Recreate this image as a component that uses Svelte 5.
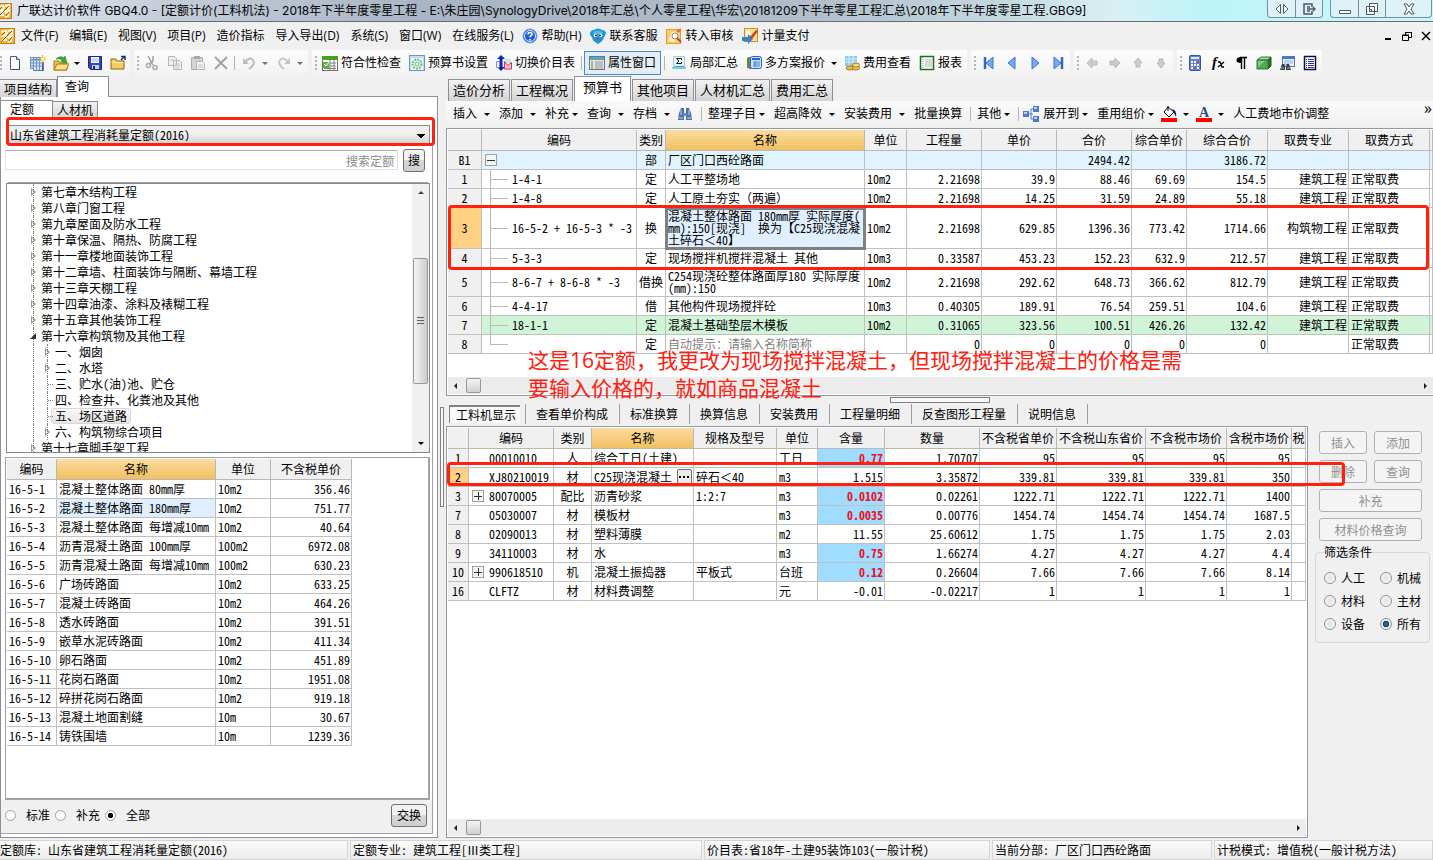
<script lang="ts">
  type Column = { title: string; width?: number; align?: string; active?: boolean };

  const menus = [
    { text: "文件(F)" },
    { text: "编辑(E)" },
    { text: "视图(V)" },
    { text: "项目(P)" },
    { text: "造价指标" },
    { text: "导入导出(D)" },
    { text: "系统(S)" },
    { text: "窗口(W)" },
    { text: "在线服务(L)" },
    { text: "帮助(H)", icon: "help" },
    { text: "联系客服", icon: "service" },
    { text: "转入审核", icon: "audit" },
    { text: "计量支付", icon: "pay" },
  ];

  type Tool = { icon?: string; text?: string; drop?: boolean; sep?: boolean; on?: boolean; off?: boolean; label?: string };

  const toolGroups: Tool[][] = [
    [
      { icon: "new", label: "新建" },
      { icon: "newgrid", label: "新建工程" },
      { icon: "open", label: "打开", drop: true },
      { icon: "save", label: "保存" },
      { icon: "folder", label: "目录" },
    ],
    [
      { icon: "cut", label: "剪切", off: true },
      { icon: "copy", label: "复制", off: true },
      { icon: "paste", label: "粘贴", off: true },
      { icon: "delete", label: "删除", off: true },
      { sep: true },
      { icon: "undo", label: "撤销", drop: true, off: true },
      { icon: "redo", label: "恢复", drop: true, off: true },
    ],
    [
      { icon: "check", text: "符合性检查" },
      { icon: "gear", text: "预算书设置" },
      { icon: "swap", text: "切换价目表" },
      { sep: true },
      { icon: "props", text: "属性窗口", on: true },
      { sep: true },
      { icon: "sum", text: "局部汇总" },
      { icon: "plans", text: "多方案报价", drop: true },
      { icon: "coins", text: "费用查看" },
      { icon: "report", text: "报表" },
    ],
    [
      { icon: "first", label: "首行" },
      { icon: "prev", label: "上一行" },
      { icon: "next", label: "下一行" },
      { icon: "last", label: "末行" },
    ],
    [
      { icon: "left", label: "左移", off: true },
      { icon: "right", label: "右移", off: true },
      { icon: "up", label: "上移", off: true },
      { icon: "down", label: "下移", off: true },
    ],
    [
      { icon: "calc", label: "计算器" },
      { icon: "fx", label: "函数" },
      { icon: "para", label: "特殊符号" },
      { icon: "cube", label: "图元" },
      { icon: "find", label: "查找" },
      { icon: "list", label: "列表" },
    ],
  ];

  const pages = ["造价分析", "工程概况", "预算书", "其他项目", "人材机汇总", "费用汇总"];

  const edits = [
    { text: "插入", drop: "wide" },
    { text: "添加", drop: "wide" },
    { text: "补充", drop: "tight" },
    { text: "查询", drop: "wide" },
    { text: "存档", drop: "wide" },
    { icon: "binoculars", label: "查找" },
    { sep: true },
    { text: "整理子目", drop: "tight" },
    { text: "超高降效", drop: "wide" },
    { text: "安装费用", drop: "wide" },
    { text: "批量换算" },
    { sep: true },
    { text: "其他", drop: "tight" },
    { sep: true },
    { icon: "expand", text: "展开到", drop: "tight" },
    { text: "重用组价", drop: "tight" },
    { icon: "bucket", label: "背景色", drop: "wide" },
    { icon: "fontcolor", label: "字体颜色", drop: "wide" },
    { text: "人工费地市价调整" },
  ];

  const chapters = [
    { text: "第七章木结构工程", level: 1, state: "closed" },
    { text: "第八章门窗工程", level: 1, state: "closed" },
    { text: "第九章屋面及防水工程", level: 1, state: "closed" },
    { text: "第十章保温、隔热、防腐工程", level: 1, state: "closed" },
    { text: "第十一章楼地面装饰工程", level: 1, state: "closed" },
    { text: "第十二章墙、柱面装饰与隔断、幕墙工程", level: 1, state: "closed" },
    { text: "第十三章天棚工程", level: 1, state: "closed" },
    { text: "第十四章油漆、涂料及裱糊工程", level: 1, state: "closed" },
    { text: "第十五章其他装饰工程", level: 1, state: "closed" },
    { text: "第十六章构筑物及其他工程", level: 1, state: "open" },
    { text: "一、烟囱", level: 2, state: "closed" },
    { text: "二、水塔", level: 2, state: "closed" },
    { text: "三、贮水(油)池、贮仓", level: 2, state: "leaf" },
    { text: "四、检查井、化粪池及其他", level: 2, state: "leaf" },
    { text: "五、场区道路", level: 2, state: "leaf", selected: true },
    { text: "六、构筑物综合项目", level: 2, state: "closed" },
    { text: "第十七章脚手架工程", level: 1, state: "closed" },
  ];

  const quotaCols: Column[] = [
    { title: "编码", width: 50 },
    { title: "名称", width: 159, active: true },
    { title: "单位", width: 55 },
    { title: "不含税单价", width: 81, align: "num" },
  ];

  const quotas = [
    ["16-5-1", "混凝土整体路面 80mm厚", "10m2", "356.46"],
    ["16-5-2", "混凝土整体路面 180mm厚", "10m2", "751.77"],
    ["16-5-3", "混凝土整体路面 每增减10mm", "10m2", "40.64"],
    ["16-5-4", "沥青混凝土路面 100mm厚", "100m2", "6972.08"],
    ["16-5-5", "沥青混凝土路面 每增减10mm", "100m2", "630.23"],
    ["16-5-6", "广场砖路面", "10m2", "633.25"],
    ["16-5-7", "混凝土砖路面", "10m2", "464.26"],
    ["16-5-8", "透水砖路面", "10m2", "391.51"],
    ["16-5-9", "嵌草水泥砖路面", "10m2", "411.34"],
    ["16-5-10", "卵石路面", "10m2", "451.89"],
    ["16-5-11", "花岗石路面", "10m2", "1951.08"],
    ["16-5-12", "碎拼花岗石路面", "10m2", "919.18"],
    ["16-5-13", "混凝土地面割缝", "10m", "30.67"],
    ["16-5-14", "铸铁围墙", "10m", "1239.36"],
  ];

  const budgetCols: Column[] = [
    { title: "", width: 34, align: "rownum" },
    { title: "编码", width: 155, align: "code" },
    { title: "类别", width: 29, align: "mid" },
    { title: "名称", width: 199, active: true, align: "name" },
    { title: "单位", width: 42, align: "unit" },
    { title: "工程量", width: 75, align: "num" },
    { title: "单价", width: 75, align: "num" },
    { title: "合价", width: 75, align: "num" },
    { title: "综合单价", width: 55, align: "num" },
    { title: "综合合价", width: 81, align: "num" },
    { title: "取费专业", width: 81, align: "num" },
    { title: "取费方式", width: 81 },
    { title: "" },
  ];

  const budget = [
    { kind: "part", cells: ["B1", "", "部", "厂区门口西砼路面", "", "", "", "2494.42", "", "3186.72", "", "", ""] },
    { kind: "item", cells: ["1", "1-4-1", "定", "人工平整场地", "10m2", "2.21698", "39.9", "88.46", "69.69", "154.5", "建筑工程", "正常取费", ""] },
    { kind: "item", cells: ["2", "1-4-8", "定", "人工原土夯实（两遍）", "10m2", "2.21698", "14.25", "31.59", "24.89", "55.18", "建筑工程", "正常取费", ""] },
    { kind: "item current", cells: ["3", "16-5-2 + 16-5-3 * -3", "换", "混凝土整体路面 180mm厚 实际厚度(\nmm):150[现浇]  换为【C25现浇混凝\n土碎石＜40】", "10m2", "2.21698", "629.85", "1396.36", "773.42", "1714.66", "构筑物工程", "正常取费", ""] },
    { kind: "item", cells: ["4", "5-3-3", "定", "现场搅拌机搅拌混凝土 其他", "10m3", "0.33587", "453.23", "152.23", "632.9", "212.57", "建筑工程", "正常取费", ""] },
    { kind: "item", cells: ["5", "8-6-7 + 8-6-8 * -3", "借换", "C254现浇砼整体路面厚180 实际厚度\n(mm):150", "10m2", "2.21698", "292.62", "648.73", "366.62", "812.79", "建筑工程", "正常取费", ""] },
    { kind: "item", cells: ["6", "4-4-17", "借", "其他构件现场搅拌砼", "10m3", "0.40305", "189.91", "76.54", "259.51", "104.6", "建筑工程", "正常取费", ""] },
    { kind: "item green", cells: ["7", "18-1-1", "定", "混凝土基础垫层木模板", "10m2", "0.31065", "323.56", "100.51", "426.26", "132.42", "建筑工程", "正常取费", ""] },
    { kind: "item hint", cells: ["8", "", "定", "自动提示：请输入名称简称", "", "0", "0", "0", "0", "0", "", "正常取费", ""] },
  ];

  const details = ["工料机显示", "查看单价构成", "标准换算", "换算信息", "安装费用", "工程量明细", "反查图形工程量", "说明信息"];

  const resourceCols: Column[] = [
    { title: "", width: 21, align: "rownum" },
    { title: "编码", width: 85, align: "code" },
    { title: "类别", width: 38, align: "mid" },
    { title: "名称", width: 102, active: true, align: "name" },
    { title: "规格及型号", width: 83 },
    { title: "单位", width: 41 },
    { title: "含量", width: 67, align: "num" },
    { title: "数量", width: 95, align: "num" },
    { title: "不含税省单价", width: 77, align: "num" },
    { title: "不含税山东省价", width: 89, align: "num" },
    { title: "不含税市场价", width: 81, align: "num" },
    { title: "含税市场价", width: 65, align: "num" },
    { title: "税" },
  ];

  const resources = [
    { cells: ["1", "00010010", "人", "综合工日(土建)", "", "工日", "0.77", "1.70707", "95", "95", "95", "95", ""], changed: true },
    { cells: ["2", "XJ80210019", "材", "C25现浇混凝土", "碎石＜40", "m3", "1.515", "3.35872", "339.81", "339.81", "339.81", "350", ""], current: true },
    { cells: ["3", "80070005", "配比", "沥青砂浆", "1:2:7", "m3", "0.0102", "0.02261", "1222.71", "1222.71", "1222.71", "1400", ""], changed: true, group: true },
    { cells: ["7", "05030007", "材", "模板材", "", "m3", "0.0035", "0.00776", "1454.74", "1454.74", "1454.74", "1687.5", ""], changed: true },
    { cells: ["8", "02090013", "材", "塑料薄膜", "", "m2", "11.55", "25.60612", "1.75", "1.75", "1.75", "2.03", ""] },
    { cells: ["9", "34110003", "材", "水", "", "m3", "0.75", "1.66274", "4.27", "4.27", "4.27", "4.4", ""], changed: true },
    { cells: ["10", "990618510", "机", "混凝土振捣器", "平板式", "台班", "0.12", "0.26604", "7.66", "7.66", "7.66", "8.14", ""], changed: true, group: true },
    { cells: ["16", "CLFTZ", "材", "材料费调整", "", "元", "-0.01", "-0.02217", "1", "1", "1", "1", ""] },
  ];

  const filters = ["人工", "机械", "材料", "主材", "设备", "所有"];
  const scopes = ["标准", "补充", "全部"];

  let scope = $state("全部");
  let filter = $state("所有");
  let keyword = $state("");
</script>

{#snippet icon(name: string)}
  <svg class="icon" viewBox="0 0 16 16" width="16" height="16" aria-hidden="true">
    {#if name === "app"}
      <rect x="0" y="0" width="16" height="16" fill="#c87a10" />
      <rect x="1" y="1" width="14" height="14" fill="#f3b43c" />
      <path d="M2 4l5-1 1 2-4 3 4 0-4 4h4M9 3l4-1v3l-4 5 4-2-1 5-3 1" stroke="#fff8d8" stroke-width="2" fill="none" />
      <path d="M2 14l11-11M6 4L3 7M13 9l-3 4" stroke="#8a4c08" fill="none" />
    {:else if name === "help"}
      <circle cx="8" cy="8" r="7" fill="#1d5fd0" stroke="#7ba0e0" />
      <circle cx="8" cy="8" r="5.5" fill="none" stroke="#dce9ff" />
      <path d="M6 6.500c0-3 4.500-2.500 4 0-.3 1-2 1-2 2.700M8 11v1.500" stroke="#fff" stroke-width="1.600" fill="none" />
    {:else if name === "service"}
      <path d="M0 5q1-3 4-3 4-3 8 0 3 0 4 3-1 3-2 4-1 4-3 5l-3 2-3-2Q2 12 2 9 0 8 0 5z" fill="#1894d8" />
      <path d="M3 4q5-3 10 0v2H3z" fill="#4cbcf0" />
      <circle cx="5.500" cy="7.500" r="1.800" fill="#fff" /><circle cx="10.500" cy="7.500" r="1.800" fill="#fff" />
      <circle cx="6" cy="7.500" r="1" fill="#123" /><circle cx="10" cy="7.500" r="1" fill="#123" />
      <path d="M7 11h2" stroke="#e83020" stroke-width="1.500" />
    {:else if name === "audit"}
      <rect x="0.500" y="1.500" width="14" height="14" fill="#f7ca6c" stroke="#e0a040" />
      <path d="M2 13l4-9 5-1 2 3-5 8z" fill="#fff2c8" />
      <circle cx="9" cy="8" r="3" fill="#fff" stroke="#a08070" />
      <path d="M11 10l4 4" stroke="#b05020" stroke-width="2" />
      <path d="M10 3l5-3v3l-3 2z" fill="#e8742c" />
    {:else if name === "pay"}
      <rect x="2.500" y="0.500" width="13" height="13" fill="#fbe39c" stroke="#d08a20" />
      <path d="M4 3h4v4H4z" fill="#fff" />
      <path d="M0 9h6V6l5 5-5 5v-3H0z" fill="#2a86d8" />
      <path d="M8 9l6-7 2 1-6 8z" fill="#d8381c" />
    {:else if name === "new"}
      <path d="M3.500 1.500h6l3 3v10h-9z" fill="#fff" stroke="#4c5c84" />
      <path d="M9.500 1.500v3h3" fill="#dce4f4" stroke="#4c5c84" />
      <path d="M12.500 6v8.500H5" stroke="#34446c" fill="none" />
    {:else if name === "newgrid"}
      <path d="M0.500 2.500h10v11h-10z" fill="#c4dcf8" stroke="#6c90c8" />
      <path d="M3.500 4.500h9v11h-9z" fill="#dce8f8" stroke="#5478b0" />
      <path d="M0 5h11M0 8h13M0 11h13M6.500 3v12M9.500 3v12M3.500 3v12" stroke="#6c90c8" />
      <path d="M13 7v9" stroke="#34588c" stroke-width="1.500" />
      <path d="M12.500 0v8M9 4h7M10 1.500l5 5M15 1.500l-5 5" stroke="#f0b824" />
      <circle cx="12.500" cy="4" r="1.500" fill="#fff4a0" />
    {:else if name === "open"}
      <path d="M1 15V6h5l1 2h7v7z" fill="#f0c040" stroke="#a87818" />
      <path d="M1 15l3-6h12l-3 6z" fill="#fce08c" stroke="#a87818" />
      <path d="M3 4q4-4 8-1l1-2 2 7-6-1 1-2Q6 3 3 4z" fill="#30b030" stroke="#187818" stroke-width="0.500" />
    {:else if name === "save"}
      <path d="M1.500 1.500h13v13h-11l-2-2z" fill="#3448b8" stroke="#1c2880" />
      <rect x="4" y="2" width="8" height="6" fill="#f4f6ff" />
      <path d="M5 4h6M5 6h6" stroke="#a8b4d8" />
      <rect x="5" y="10" width="7" height="4" fill="#c8d0e8" /><rect x="6" y="11" width="2" height="3" fill="#1c2880" />
    {:else if name === "folder"}
      <path d="M1 14V4h5l1 2h7v8z" fill="#f4cc60" stroke="#8c6410" />
      <path d="M1.500 7.500h12" stroke="#fff0b0" />
      <path d="M11 5l4-4M11 1.500h4V5" fill="none" stroke="#24345c" stroke-width="1.500" />
    {:else if name === "cut"}
      <path d="M4 1l5 9M9 1v5L5 9" fill="none" stroke="#a0a0a0" stroke-width="1.500" />
      <circle cx="4.500" cy="10.500" r="2" fill="none" stroke="#a8a8a8" stroke-width="1.500" /><circle cx="11" cy="12.500" r="2" fill="none" stroke="#a8a8a8" stroke-width="1.500" />
    {:else if name === "copy"}
      <path d="M1.500 1.500h6l2 2v7h-8zM6.500 5.500h6l2 2v7h-8z" fill="#f0f0f0" stroke="#b4b4b4" />
      <path d="M8 9h5M8 11h5M8 13h4M3 5h4" stroke="#c4c4c4" />
    {:else if name === "paste"}
      <path d="M1.500 2.500h11v12h-11z" fill="#d4d4d4" stroke="#acacac" />
      <rect x="4" y="1" width="6" height="3" fill="#a8a8a8" />
      <path d="M6.500 6.500h6l2 2v6h-8z" fill="#f4f4f4" stroke="#b4b4b4" /><path d="M8 10h5M8 12h5" stroke="#c4c4c4" />
    {:else if name === "delete"}
      <path d="M2 2l12 12M14 2L2 14" stroke="#a0a0a0" stroke-width="1.800" />
    {:else if name === "undo"}
      <path d="M4 7q5-6 8-2t-4 9" fill="none" stroke="#b8bcc4" stroke-width="2" /><path d="M2 3v6h6z" fill="#b8bcc4" />
    {:else if name === "redo"}
      <path d="M12 7Q7 1 4 5t4 9" fill="none" stroke="#c4c8cc" stroke-width="2" /><path d="M14 3v6H8z" fill="#c4c8cc" />
    {:else if name === "check"}
      <rect x="0.500" y="1.500" width="15" height="14" fill="#fff" stroke="#707070" />
      <rect x="0" y="1" width="16" height="4" fill="#48a020" />
      <path d="M2 8h12M2 11h12M2 13.500h12M8 5v10M12 5v10" stroke="#808080" />
      <rect x="1" y="7" width="6" height="6" fill="#60b830" /><path d="M2 9l2 2 3-4" stroke="#fff" fill="none" />
    {:else if name === "gear"}
      <rect x="0.500" y="0.500" width="15" height="15" fill="#c0dcf4" stroke="#6898c8" />
      <rect x="2" y="3" width="12" height="12" fill="#f0faf4" />
      <circle cx="8" cy="9" r="4.500" fill="none" stroke="#68b880" stroke-width="2" stroke-dasharray="2 1" /><circle cx="8" cy="9" r="2" fill="none" stroke="#68b880" />
    {:else if name === "swap"}
      <path d="M5 0l4 4H6.500v8H9l-4 4-4-4h2.500V4H1z" fill="#1020c0" />
      <path d="M0.500 6.500h3M0.500 6.500v6h3" fill="none" stroke="#8090e0" />
      <path d="M9 4h6v4H9z" fill="#b4ecf4" /><path d="M8.500 6.500l3 4 4-3v6.500h-7z" fill="#f8c8d8" stroke="#d82858" />
    {:else if name === "props"}
      <rect x="0.500" y="1.500" width="15" height="13" fill="#e4e4dc" stroke="#68788c" />
      <rect x="1" y="2" width="14" height="3" fill="#58a8b8" />
      <path d="M2 7h2M2 9h2M2 11h2M2 13h2" stroke="#48a048" /><path d="M6 7h8M6 9h8M6 11h8M6 13h8" stroke="#989898" />
    {:else if name === "sum"}
      <path d="M2.500 1.500h11v10h-11z" fill="#e0f2fa" stroke="#b0c4d0" />
      <path d="M10.500 5V3.500h-5L8 6 5.500 8.500h5V7" fill="none" stroke="#202020" /><path d="M1 12h14v2H1z" fill="#84c8e0" /><path d="M4 11.500h9" stroke="#48a0c8" />
    {:else if name === "plans"}
      <path d="M1 3v10h4V2H3z" fill="#30a040" /><path d="M3 3h4v11H3z" fill="#e85830" />
      <rect x="4.500" y="1.500" width="11" height="12" rx="2" fill="#c8e4ff" stroke="#2464c8" />
      <path d="M6 4h8" stroke="#2464c8" stroke-width="2" /><path d="M7 7h7M7 9h7M7 11h7M9 6v6" stroke="#5080d0" />
    {:else if name === "coins"}
      <rect x="1" y="1" width="12" height="10" fill="#88cce8" /><path d="M1 4h12M1 7h12M5 1v10M9 1v10" stroke="#d8f2fc" />
      <ellipse cx="6" cy="13" rx="4" ry="2" fill="#e8c048" stroke="#a87820" /><ellipse cx="12" cy="13" rx="3.500" ry="2" fill="#f0c850" stroke="#a87820" /><ellipse cx="12" cy="10" rx="3.500" ry="2" fill="#f8dc80" stroke="#a87820" />
    {:else if name === "report"}
      <rect x="1.500" y="1.500" width="13" height="13" fill="#fff" stroke="#147014" stroke-width="1.500" />
      <path d="M4 2v12" stroke="#8c8c8c" stroke-dasharray="1 1" /><path d="M6 5h7M6 7h7M6 9h7M6 11h7" stroke="#b0b0b0" />
    {:else if name === "first"}
      <path d="M4 2v12" stroke="#3068c8" stroke-width="2.500" /><path d="M12 2v12L5 8z" fill="#78a8f0" stroke="#3c74d0" />
    {:else if name === "prev"}
      <path d="M11 2v12L4 8z" fill="#78a8f0" stroke="#3c74d0" />
    {:else if name === "next"}
      <path d="M5 2v12l7-6z" fill="#78a8f0" stroke="#3c74d0" />
    {:else if name === "last"}
      <path d="M12 2v12" stroke="#3068c8" stroke-width="2.500" /><path d="M4 2v12l7-6z" fill="#78a8f0" stroke="#3c74d0" />
    {:else if name === "left"}
      <path d="M3 8l5-5v3h5v4H8v3z" fill="#ccc" stroke="#b8b8b8" />
    {:else if name === "right"}
      <path d="M13 8L8 3v3H3v4h5v3z" fill="#ccc" stroke="#b8b8b8" />
    {:else if name === "up"}
      <path d="M8 3l4 5h-2v4H6V8H4z" fill="#ccc" stroke="#b8b8b8" />
    {:else if name === "down"}
      <path d="M8 13l4-5h-2V4H6v4H4z" fill="#ccc" stroke="#b8b8b8" />
    {:else if name === "calc"}
      <rect x="2.500" y="0.500" width="11" height="15" rx="1" fill="#6488cc" stroke="#385498" />
      <rect x="4" y="2" width="8" height="2" fill="#d4ecfc" />
      <path d="M4 7h8M4 10h8M4 13h8" stroke="#f0f4fc" stroke-width="2" stroke-dasharray="2 1" /><path d="M10 7h2M7 13h2" stroke="#e04040" stroke-width="2" />
    {:else if name === "fx"}
      <text x="2" y="12" font-family="Liberation Serif, serif" font-size="15" font-style="italic" font-weight="bold">f</text>
      <path d="M8 7l2 0 2 5 2 0M14 7l-6 5" fill="none" stroke="#000" stroke-width="1.300" />
    {:else if name === "para"}
      <path d="M14 2.500H7M8.500 2v12M11.500 2v12" stroke="#000" stroke-width="1.400" /><path d="M8 2v6Q3 8 3.500 5T8 2z" />
    {:else if name === "cube"}
      <path d="M1 5l4-3h10l-3 3z" fill="#a4dca4" stroke="#307830" /><path d="M12 5l3-3v9l-3 3z" fill="#2c702c" stroke="#205820" /><path d="M1 5h11v9H1z" fill="#54a854" stroke="#307830" /><path d="M2 6h7l-7 6z" fill="#84cc84" />
    {:else if name === "find"}
      <rect x="3.500" y="1.500" width="12" height="10" fill="#e8f2fc" stroke="#5078b8" /><path d="M4 3h11" stroke="#4078d0" stroke-width="2" /><path d="M5 6h9M5 8h9" stroke="#90b0d8" />
      <path d="M1 15l2-6h3v6zM7 15V9h3l2 6z" fill="#343c44" /><path d="M2 13h3M8 13h3M5 10h3" stroke="#a8b4c0" />
    {:else if name === "list"}
      <rect x="2.500" y="1.500" width="11" height="13" fill="#fff" stroke="#101030" stroke-width="1.500" />
      <path d="M4 4.500h1M4 6.500h1M4 8.500h1M4 10.500h1M4 12.500h1M6 4.500h6M6 6.500h6M6 8.500h6M6 10.500h6M6 12.500h6" stroke="#2430b0" />
    {:else if name === "binoculars"}
      <path d="M1 14l1-7 2-5h3v12zM9 14V2h3l2 5 1 7z" fill="#4c70a8" /><path d="M6 7h4v3H6z" fill="#6c8cc0" /><path d="M2 12h4M10 12h4M4 4v5M12 4v5" stroke="#c8daf4" />
    {:else if name === "expand"}
      <path d="M5 8h5M8 3h3M8 3v10h3" stroke="#5c7cb8" fill="none" />
      <path d="M0 5h6v6H0zM10 0h6v6h-6zM10 10h6v6h-6z" fill="#4c7cc8" /><path d="M1 6h3v2H1zM11 1h3v2h-3zM11 11h3v2h-3z" fill="#b8d4f8" />
    {:else if name === "bucket"}
      <path d="M7 1l6 5-5 5-5-5z" fill="#fff" stroke="#000" /><path d="M7 0v5" stroke="#000" /><path d="M11 3q5 1 4 8l-2-4z" fill="#14148c" /><path d="M0 12h16v4H0z" fill="#f00" />
    {:else if name === "fontcolor"}
      <text x="3" y="11" font-family="Liberation Serif, serif" font-size="14" font-weight="bold" fill="#2c4c8c">A</text><path d="M0 12h16v4H0z" fill="#f00" />
    {/if}
  </svg>
{/snippet}

{#snippet hscroll()}
  <div class="hscroll">
    <i class="tri tri-left"></i>
    <span class="thumb"></span>
    <i class="tri tri-right"></i>
  </div>
{/snippet}

{#snippet head(cols: Column[])}
  <colgroup>
    {#each cols as col}
      <col style:width={col.width ? `${col.width}px` : "auto"} />
    {/each}
  </colgroup>
  <thead>
    <tr>
      {#each cols as col}
        <th class:active={col.active}>{col.title}</th>
      {/each}
    </tr>
  </thead>
{/snippet}

<div class="window">
  <header class="titlebar">
    {@render icon("app")}
    <h1>广联达计价软件 GBQ4.0 - [定额计价(工料机法) - 2018年下半年度零星工程 - E:\朱庄园\SynologyDrive\2018年汇总\个人零星工程\华宏\20181209下半年零星工程汇总\2018年下半年度零星工程.GBG9]</h1>
    <div class="caption">
      <button aria-label="展开"><svg viewBox="0 0 14 12" width="14" height="12"><path d="M5.500 1.500v9L1 6zM8.500 1.500v9L13 6z" fill="#fff" stroke="#4c5868" /></svg></button>
      <button aria-label="切换"><svg viewBox="0 0 14 12" width="14" height="12"><path d="M10 4V1H2v10h8V8M5 4h3M5 8h3M5 6h8M11 4l2 2-2 2" fill="none" stroke="#4c5868" stroke-width="1.500" /></svg></button>
    </div>
    <div class="caption">
      <button aria-label="最小化"><svg viewBox="0 0 14 12" width="14" height="12"><path d="M1.500 7.500h11v3h-11z" fill="#fff" stroke="#4c5868" /></svg></button>
      <button aria-label="还原"><svg viewBox="0 0 14 12" width="14" height="12"><path d="M4.500.5h8v8h-8zM1.500 3.500h8v8h-8z" fill="#fff" stroke="#4c5868" /><path d="M4.500 6.500h2v2h-2z" fill="none" stroke="#4c5868" /></svg></button>
      <button class="close" aria-label="关闭"><svg viewBox="0 0 14 12" width="14" height="12"><path d="M2 1h3l2 3 2-3h3L9 6l3 5H9L7 8l-2 3H2l3-5z" fill="#fff" stroke="#4c5868" /></svg></button>
    </div>
  </header>

  <nav class="menubar">
    {@render icon("app")}
    {#each menus as menu}
      <button class:pictured={menu.icon}>
        {#if menu.icon}{@render icon(menu.icon)}{/if}{menu.text}
      </button>
    {/each}
    <div class="mdi">
      <button aria-label="最小化"><svg viewBox="0 0 10 10" width="10" height="10"><path d="M2 8h6" stroke="#000" stroke-width="2" /></svg></button>
      <button aria-label="还原"><svg viewBox="0 0 10 10" width="10" height="10"><path d="M3 1.500h6M3.500 1v3M9.500 1v5.500H7M.5 4.500h6v5h-6zM0 4h7" fill="none" stroke="#000" /></svg></button>
      <button aria-label="关闭"><svg viewBox="0 0 10 10" width="10" height="10"><path d="M1 1l8 8M9 1L1 9" stroke="#000" stroke-width="1.500" /></svg></button>
    </div>
  </nav>

  <div class="toolbar">
    {#each toolGroups as group}
      <div class="tools">
        <span class="grip"></span>
        {#each group as tool}
          {#if tool.sep}
            <span class="sep"></span>
          {:else}
            <button class:on={tool.on} disabled={tool.off} aria-label={tool.label}>
              {@render icon(tool.icon ?? "")}{#if tool.text}<span>{tool.text}</span>{/if}{#if tool.drop}<i class="tri tri-down"></i>{/if}
            </button>
          {/if}
        {/each}
      </div>
    {/each}
  </div>

  <div class="body">
    <aside class="query">
      <div class="tabs">
        <button>项目结构</button>
        <button class="selected">查询</button>
      </div>
      <div class="query-page">
        <div class="tabs small">
          <button class="selected">定额</button>
          <button>人材机</button>
        </div>
        <div class="query-inner">
          <div class="library">
            <select aria-label="定额库">
              <option>山东省建筑工程消耗量定额(2016)</option>
            </select>
            <span class="mark mark-library"></span>
          </div>
          <form class="search">
            <input type="text" placeholder="搜索定额" aria-label="搜索定额" bind:value={keyword} />
            <button type="button">搜</button>
          </form>
          <div class="tree">
            <ul>
              {#each chapters as node}
                <li class={["level" + node.level, node.state]}>
                  <span class:picked={node.selected}>{node.text}</span>
                </li>
              {/each}
            </ul>
            <div class="vscroll">
              <i class="tri tri-up"></i>
              <span class="track"><span class="thumb"></span></span>
              <i class="tri tri-down"></i>
            </div>
          </div>
          <div class="quota">
            <table>
              {@render head(quotaCols)}
              <tbody>
                {#each quotas as row, r}
                  <tr>
                    {#each row as cell, c}
                      <td class={[quotaCols[c].align, { chosen: r === 1 && c === 1 }]}>{cell}</td>
                    {/each}
                  </tr>
                {/each}
              </tbody>
            </table>
          </div>
          <div class="scopes">
            {#each scopes as name}
              <label><input type="radio" name="scope" value={name} bind:group={scope} />{name}</label>
            {/each}
            <button class="push">交换</button>
          </div>
        </div>
      </div>
    </aside>

    <div class="divider"><span></span></div>

    <main>
      <div class="tabs pages">
        {#each pages as page, i}
          <button class:selected={i === 2}>{page}</button>
        {/each}
      </div>
      <div class="editbar">
        {#each edits as item}
          {#if item.sep}
            <span class="sep"></span>
          {:else}
            <button class={[item.drop, { iconic: item.icon }]} aria-label={item.label}>
              {#if item.icon}{@render icon(item.icon)}{/if}{#if item.text}<span>{item.text}</span>{/if}{#if item.drop}<i class="tri tri-down"></i>{/if}
            </button>
          {/if}
        {/each}
        <span class="more">»</span>
      </div>

      <section class="budget">
        <table>
          {@render head(budgetCols)}
          <tbody>
            {#each budget as row}
              <tr class={row.kind}>
                {#each row.cells as cell, c}
                  <td class={budgetCols[c].align}>
                    {#if row.kind === "part" && c === 1}<span class="box minus"></span>{/if}{cell}
                  </td>
                {/each}
              </tr>
            {/each}
          </tbody>
        </table>
        <div class="rest"></div>
        {@render hscroll()}
        <span class="mark mark-budget"></span>
        <p class="remark">这是16定额，我更改为现场搅拌混凝土，但现场搅拌混凝土的价格是需<br />要输入价格的，就如商品混凝土</p>
      </section>

      <div class="splitter"><span></span></div>

      <section class="detail">
        <div class="detail-tabs">
          {#each details as name, i}
            <button class:selected={i === 0}>{name}</button>
          {/each}
        </div>
        <div class="detail-body">
          <div class="resources">
            <table>
              {@render head(resourceCols)}
              <tbody>
                {#each resources as row}
                  <tr class:current={row.current}>
                    {#each row.cells as cell, c}
                      <td class={[resourceCols[c].align, { changed: row.changed && c === 6 }]}>
                        {#if row.group && c === 1}<span class="box plus"></span>{/if}{cell}{#if row.current && c === 3}<button class="dots" aria-label="选择"><svg viewBox="0 0 11 2" width="11" height="2"><path d="M0 0h2v2H0zM4 0h2v2H4zM8 0h2v2H8z" /></svg></button>{/if}
                      </td>
                    {/each}
                  </tr>
                {/each}
              </tbody>
            </table>
            <div class="rest"></div>
            {@render hscroll()}
            <span class="mark mark-resource"></span>
          </div>
          <div class="side">
            <div class="actions">
              <button disabled>插入</button>
              <button disabled>添加</button>
              <button disabled>删除</button>
              <button disabled>查询</button>
              <button disabled class="full">补充</button>
              <button disabled class="full">材料价格查询</button>
            </div>
            <fieldset>
              <legend>筛选条件</legend>
              {#each filters as name}
                <label><input type="radio" name="filter" value={name} bind:group={filter} />{name}</label>
              {/each}
            </fieldset>
          </div>
        </div>
      </section>
    </main>
  </div>

  <footer class="status">
    <span>定额库: 山东省建筑工程消耗量定额(2016)</span>
    <span>定额专业: 建筑工程[Ⅲ类工程]</span>
    <span>价目表:省18年-土建95装饰103(一般计税)</span>
    <span>当前分部: 厂区门口西砼路面</span>
    <span>计税模式: 增值税(一般计税方法)</span>
  </footer>
</div>

<style>
  :global(body) {
    margin: 0;
    background: #f0f0f0;
  }

  .window {
    display: flex;
    flex-direction: column;
    min-height: 100vh;
    overflow: hidden;
    color: #000;
    font: 12px/12px "Noto Sans Mono CJK SC", "Liberation Mono", "Noto Sans CJK SC", monospace;
  }

  .window :global(*) {
    box-sizing: border-box;
  }

  button,
  input,
  select {
    font: inherit;
    color: inherit;
  }

  button {
    padding: 0;
    border: 0;
    background: none;
    white-space: nowrap;
  }

  .icon {
    flex: none;
    display: block;
  }

  .tri {
    flex: none;
    width: 0;
    height: 0;
    border: 3px solid transparent;
  }

  .tri-down {
    border-top-color: currentColor;
    border-bottom: 0;
  }

  .tri-up {
    border-bottom-color: #404040;
    border-top: 0;
  }

  .tri-left {
    border-right-color: #202020;
    border-left: 0;
  }

  .tri-right {
    border-left-color: #202020;
    border-right: 0;
  }

  .titlebar {
    display: flex;
    align-items: flex-start;
    height: 22px;
    border-bottom: 1px solid #686c74;
    background: linear-gradient(90deg, #e4e8f0, #c4ccd8 12%, #a8b4c4 30%, #b0bcc8 55%, #c4d8e0 70%, #d8f0f4 78%, #bcf4f8 84%, #c8f8fc);
    font-family: Inter, "Noto Sans CJK SC", sans-serif;
  }

  .titlebar .icon {
    margin: 3px 5px 0 -4px;
  }

  h1 {
    flex: 1;
    margin: 0;
    overflow: hidden;
    white-space: nowrap;
    font-size: 12px;
    line-height: 21px;
    font-weight: normal;
  }

  .caption {
    display: flex;
    height: 18px;
    margin-right: 7px;
    border: 1px solid #7c8c98;
    border-top: 0;
    border-radius: 0 0 4px 4px;
    background: #dcf2f6;
  }

  .caption:last-child {
    margin-right: 1px;
  }

  .caption button {
    display: grid;
    place-items: center;
    width: 27px;
  }

  .caption button + button {
    border-left: 1px solid #7c8c98;
  }

  .caption .close {
    width: 46px;
  }

  .menubar {
    display: flex;
    align-items: center;
    gap: 11px;
    height: 28px;
    font-family: "Open Sans", "Noto Sans CJK SC", sans-serif;
  }

  .menubar > .icon {
    margin: 0 -5px 0 -1px;
  }

  .menubar button {
    display: flex;
    align-items: center;
    gap: 4px;
    line-height: 20px;
  }

  .menubar .pictured {
    margin-left: -3px;
  }

  .mdi {
    display: flex;
    gap: 9px;
    margin: 0 2px 0 auto;
  }

  .toolbar {
    display: flex;
    gap: 4px;
    height: 26px;
    font-family: "Open Sans", "Noto Sans CJK SC", sans-serif;
  }

  .tools {
    display: flex;
    align-items: center;
    padding-right: 1px;
    border-radius: 2px;
    background: linear-gradient(#fcfcfc, #f2f2f2);
  }

  .tools:first-child {
    margin-left: -3px;
  }

  .grip {
    width: 2px;
    height: 15px;
    margin: 0 1px 0 3px;
    background: repeating-linear-gradient(#b4b4b4 0 2px, transparent 2px 4px);
  }

  .tools button {
    display: flex;
    align-items: center;
    height: 22px;
    line-height: 20px;
  }

  .tools .icon {
    margin: 0 3px 0 4px;
  }

  .tools button span {
    margin-right: 4px;
  }

  .tools .tri {
    margin: 0 3px 0 2px;
  }

  .tools button:disabled .tri {
    margin-right: 4px;
    color: #707070;
  }

  .tools .on {
    margin: 0 2px 0 1px;
    outline: 1px solid #3c8ce4;
    background: #e4ecf4;
  }

  .sep {
    flex: none;
    width: 1px;
    height: 14px;
    margin: 0 2px;
    background: #b4b4b4;
  }

  .body {
    flex: 1;
    display: flex;
    min-height: 0;
  }

  .query {
    flex: 0 0 438px;
    display: flex;
    flex-direction: column;
  }

  .tabs {
    display: flex;
    align-items: flex-end;
    height: 21px;
  }

  .tabs button {
    height: 18px;
    padding: 0 4px;
    border: 1px solid #8c8e94;
    border-bottom: 0;
    border-left-width: 0;
    background: linear-gradient(#f2f2f2, #d4d4d4);
  }

  .tabs .selected {
    align-self: stretch;
    position: relative;
    background: #fff;
  }

  .query > .tabs {
    z-index: 1;
    margin-bottom: -1px;
  }

  .query > .tabs .selected {
    height: auto;
    padding: 0 19px 2px 7px;
    border-left-width: 1px;
  }

  .query-page {
    flex: 1;
    display: flex;
    flex-direction: column;
    padding: 3px 4px 3px 0;
    border: 1px solid #8c8e98;
    background: #fff;
  }

  .tabs.small {
    height: 18px;
    margin-left: -1px;
  }

  .tabs.small .selected {
    padding: 0 18px 0 9px;
    border-left-width: 1px;
  }

  .tabs.small button {
    height: 17px;
    padding: 0 4px;
  }

  .query-inner {
    flex: 1;
    display: flex;
    flex-direction: column;
    padding-top: 6px;
    padding-left: 4px;
    border-right: 1px solid #a0a0a8;
    border-bottom: 1px solid #a0a0a8;
  }

  .library {
    position: relative;
    margin: 1px 2px 0 1px;
  }

  select {
    display: block;
    width: 100%;
    height: 19px;
    padding: 0 3px;
    border: 1px solid #8c8c8c;
    border-radius: 0;
    appearance: none;
    background: linear-gradient(to top right, transparent 50%, #000 50%) no-repeat calc(100% - 8px) 8px / 4px 4px, linear-gradient(to top left, transparent 50%, #000 50%) no-repeat calc(100% - 4px) 8px / 4px 4px, linear-gradient(#f0f0f0 45%, #d4d4d4);
  }

  .mark {
    position: absolute;
    z-index: 2;
    border: 3px solid #ff2010;
    border-radius: 4px;
    pointer-events: none;
  }

  .mark-library {
    inset: -8px -5px -2px 0;
  }

  .search {
    display: flex;
    align-items: center;
    gap: 5px;
    height: 24px;
    margin: 4px 7px 0 0;
  }

  .search input {
    flex: 1;
    min-width: 0;
    height: 20px;
    padding: 0 3px;
    border: 1px solid #dce2ec;
    border-top-color: #abadb3;
    outline: 0;
    background: #fff;
    text-align: right;
  }

  .search input::placeholder {
    color: #8c8c8c;
  }

  .search button,
  .push {
    height: 23px;
    padding: 0 4px;
    border: 1px solid #707070;
    border-radius: 3px;
    background: linear-gradient(#f2f2f2 48%, #d6d6d6 50%, #cfcfcf);
  }

  .tree {
    display: flex;
    height: 270px;
    margin: 11px 2px 4px 1px;
    border: 1px solid #828790;
    box-shadow: 0 -3px 0 -2px #a0a0a0;
    overflow: hidden;
  }

  .tree ul {
    flex: 1;
    margin: 0;
    padding: 0 0 0 26px;
    list-style: none;
  }

  .tree li {
    position: relative;
    height: 16px;
    padding-left: 8px;
    line-height: 16px;
    white-space: nowrap;
  }

  .tree li::before {
    content: "";
    position: absolute;
    left: 0;
    top: 0;
    height: 16px;
    border-left: 1px dotted #808080;
  }

  .tree li.level2 {
    padding-left: 22px;
  }

  .tree li.level2::after {
    content: "";
    position: absolute;
    left: 14px;
    top: 0;
    height: 16px;
    border-left: 1px dotted #808080;
  }

  .tree li.leaf::after {
    width: 6px;
    background: repeating-linear-gradient(90deg, #808080 0 1px, transparent 1px 2px) no-repeat 0 8px / 6px 1px;
  }

  .tree span {
    position: relative;
  }

  .tree .closed span::before,
  .tree .open span::before {
    content: "";
    position: absolute;
    left: -10px;
    top: 5px;
    width: 5px;
    height: 8px;
    background: #909090;
    clip-path: polygon(0 0, 5px 4px, 0 8px, 0 0, 1px 2px, 1px 6px, 3px 4px, 1px 2px);
  }

  .tree .open span::before {
    left: -11px;
    top: 6px;
    width: 6px;
    height: 6px;
    background: #303030;
    clip-path: polygon(100% 0, 100% 100%, 0 100%);
  }

  .tree .picked {
    display: inline-block;
    margin-left: -4px;
    padding: 0 3px;
    line-height: 14px;
    border: 1px solid #d8d8d8;
    border-radius: 3px;
    background: linear-gradient(#f8f8f8, #e6e6e6);
  }

  .vscroll {
    display: flex;
    flex-direction: column;
    align-items: center;
    width: 17px;
    padding: 7px 0;
    background: #f0f0f0;
  }

  .track {
    flex: 1;
    display: flex;
    flex-direction: column;
    width: 100%;
    padding: 64px 1px 0;
  }

  .vscroll .thumb {
    height: 126px;
    border: 1px solid #989898;
    border-radius: 2px;
    background: repeating-linear-gradient(#606060 0 1px, transparent 1px 3px) no-repeat center / 7px 8px, linear-gradient(90deg, #f4f4f4, #ccc);
  }

  .quota {
    flex: 1;
    padding: 1px;
    margin: 0 2px 0 0;
    border: 1px solid #a0a0a8;
    border-width: 1px 2px 2px 1px;
    background: #fff;
  }

  .quota table {
    width: 345px;
  }

  table {
    table-layout: fixed;
    width: 100%;
    border-collapse: separate;
    border-spacing: 0;
    background: #fff;
  }

  th {
    height: 21px;
    padding: 0;
    border: solid #b8b8b8;
    border-width: 0 1px 1px 0;
    background: #f0f0f0;
    font-weight: normal;
    white-space: nowrap;
    overflow: hidden;
  }

  th.active {
    background: linear-gradient(#fbdca0, #f0c060);
  }

  td {
    position: relative;
    height: 19px;
    padding: 2px 1px 2px 2px;
    border: solid #c0c0c0;
    border-width: 0 1px 1px 0;
    white-space: nowrap;
  }

  td.num {
    text-align: right;
  }

  td.mid,
  td.rownum {
    text-align: center;
    padding: 2px 0;
  }

  td.rownum {
    background: #f0f0f0;
  }

  td.chosen {
    background: #e0efff;
  }

  .scopes {
    display: flex;
    align-items: center;
    gap: 5px;
    height: 33px;
    padding: 0 5px 3px 0;
    margin-left: -4px;
    background: #f0f0f0;
  }

  .scopes label {
    display: flex;
    align-items: center;
    gap: 10px;
    padding-left: 4px;
  }

  .scopes label + label {
    padding-left: 0;
  }

  .scopes .push {
    margin-left: auto;
    padding: 0 5px;
  }

  input[type="radio"] {
    flex: none;
    width: 11px;
    height: 11px;
    margin: 0;
    border: 1px solid #a0a0a0;
    border-radius: 50%;
    appearance: none;
    background: #fff;
  }

  input[type="radio"]:checked {
    background: radial-gradient(#000 40%, #fff 46%);
  }

  .divider {
    width: 8px;
    display: flex;
    align-items: center;
    justify-content: center;
  }

  .divider span {
    width: 4px;
    height: 100px;
    border: 1px solid #808080;
    background: #f8f8f8;
  }

  main {
    flex: 1;
    min-width: 0;
    display: flex;
    flex-direction: column;
  }

  .pages {
    gap: 1px;
    height: 25px;
    padding-left: 2px;
    font-size: 13px;
  }

  .pages button {
    height: 22px;
    padding: 0 4px 2px;
    border-left-width: 1px;
  }

  .pages .selected {
    height: auto;
    padding: 0 8px 4px;
    border-bottom: 0;
  }

  .editbar {
    display: flex;
    align-items: center;
    height: 26px;
    margin-bottom: 1px;
    padding: 0 0 0 7px;
    background: linear-gradient(#fafafa, #f0f0f0);
    font-family: "Open Sans", "Noto Sans CJK SC", sans-serif;
  }

  .editbar button {
    display: flex;
    align-items: center;
    line-height: 20px;
    margin-right: 9px;
  }

  .editbar .tri {
    margin-left: 3px;
  }

  .editbar .wide .tri {
    margin-left: 7px;
  }

  .editbar .iconic {
    margin-left: -2px;
  }

  .editbar .icon + span {
    margin-left: 4px;
  }

  .editbar .iconic.wide .tri {
    margin-left: 6px;
  }

  .editbar .sep {
    margin: 0 6px 0 -1px;
  }

  .more {
    margin: 0 1px 12px auto;
    font-size: 16px;
  }

  .budget,
  .resources {
    position: relative;
    display: flex;
    flex-direction: column;
    padding: 1px;
    border: 1px solid #9498a0;
    background: #fff;
  }

  .budget {
    border-right: 0;
    padding-right: 0;
  }

  .rest {
    flex: 1;
    min-height: 23px;
  }

  .budget .code {
    padding-left: 30px;
  }

  .budget .name {
    white-space: pre-wrap;
  }

  .item .code::before,
  .item .code::after {
    content: "";
    position: absolute;
    left: 8px;
    top: 0;
    height: calc(100% + 1px);
    border-left: 1px solid #b8b8b8;
  }

  .item .code::after {
    top: 50%;
    width: 17px;
    height: 0;
    border-top: 1px solid #b8b8b8;
  }

  .hint .code::before {
    height: 50%;
  }

  .hint .name {
    color: #808080;
  }

  .part td:not(.rownum) {
    background: #e0f4ff;
  }

  .green td:not(.rownum) {
    background: #d0f4d8;
  }

  .current td.rownum {
    background: #ffd084;
  }

  .budget .current .name {
    outline: 3px solid #808080;
    outline-offset: -2px;
    background: #e0efff;
    z-index: 1;
  }

  .box {
    position: absolute;
    left: 3px;
    top: 3px;
    width: 12px;
    height: 12px;
    border: 1px solid #a0a0a0;
    background: linear-gradient(#303030, #303030) no-repeat center / 8px 1px, #f4f4f4;
  }

  .box.plus {
    background: linear-gradient(#303030, #303030) no-repeat center / 8px 1px, linear-gradient(#303030, #303030) no-repeat center / 1px 8px, #f4f4f4;
  }

  .hscroll {
    display: flex;
    align-items: center;
    height: 17px;
    padding: 0 6px;
    background: #ececec;
  }

  .hscroll .thumb {
    width: 15px;
    height: 15px;
    margin: 0 auto 0 9px;
    border: 1px solid #989898;
    border-radius: 2px;
    background: linear-gradient(#f4f4f4, #d0d0d0);
  }

  .mark-budget {
    top: 76px;
    left: 1px;
    right: 4px;
    height: 65px;
  }

  .remark {
    position: absolute;
    z-index: 2;
    left: 81px;
    top: 217px;
    margin: 0;
    color: #ff2010;
    font: 21px/28px "Open Sans", "Noto Sans CJK SC", sans-serif;
    white-space: nowrap;
  }

  .splitter {
    display: flex;
    justify-content: center;
    height: 7px;
  }

  .splitter span {
    width: 100px;
    height: 6px;
    margin-top: 1px;
    border: 1px solid #808080;
    background: #f8f8f8;
  }

  .detail {
    flex: 1;
    display: flex;
    flex-direction: column;
  }

  .detail-tabs {
    display: flex;
    align-items: center;
    height: 23px;
    padding: 0 0 2px 3px;
  }

  .detail-tabs button {
    height: 20px;
    padding: 0 11px 0 10px;
    border-right: 1px solid #a0a0a0;
  }

  .detail-tabs .selected {
    height: 18px;
    padding: 0 4px 0 6px;
    margin-right: 5px;
    border: solid #808080;
    border-width: 2px 0 0 1px;
    background: #f8f8f8;
  }

  .detail-tabs .selected + button {
    border-left: 1px solid #a0a0a0;
  }

  .detail-body {
    flex: 1;
    display: flex;
  }

  .resources {
    flex: 1;
    min-width: 0;
  }

  .resources td.code {
    padding-left: 20px;
  }

  td.changed {
    background: #a0dcff;
    color: #f01020;
    font-weight: bold;
  }

  .dots {
    position: absolute;
    right: 1px;
    top: 1px;
    display: grid;
    place-items: center;
    width: 15px;
    height: 16px;
    border: 1px solid #707070;
    border-radius: 2px;
    background: #ececec;
  }

  .mark-resource {
    top: 35px;
    left: 0;
    right: -38px;
    height: 24px;
  }

  .side {
    flex: 0 0 125px;
    padding: 5px 3px 0 7px;
  }

  .actions {
    display: grid;
    grid-template-columns: 1fr 1fr;
    gap: 6px 7px;
    padding: 0 8px 0 4px;
  }

  .actions button {
    height: 23px;
    border: 1px solid #adb2b5;
    border-radius: 3px;
    background: #f4f4f4;
    color: #909090;
  }

  .actions .full {
    grid-column: span 2;
  }

  fieldset {
    display: grid;
    grid-template-columns: 56px 1fr;
    grid-auto-rows: 23px;
    min-width: 0;
    margin: 5px 0 0;
    padding: 8px 0 7px 8px;
    border: 1px solid #d0d8e0;
    border-radius: 4px;
  }

  legend {
    padding: 0;
  }

  fieldset label {
    display: flex;
    align-items: center;
    gap: 5px;
  }

  fieldset input[type="radio"] {
    width: 12px;
    height: 12px;
    border-color: #909090;
    background: radial-gradient(#e0e0e0, #fff);
  }

  fieldset input[type="radio"]:checked {
    background: radial-gradient(#2090c0, #083858 40%, #e8e8e8 50%);
  }

  .status {
    display: grid;
    grid-template-columns: 348fr 352fr 286fr 220fr 219fr;
    gap: 2px;
    height: 22px;
    padding-top: 2px;
  }

  .status span {
    padding-left: 2px;
    border: 1px solid #d4d4d4;
    background: linear-gradient(#fafafa, #ececec);
    line-height: 18px;
    white-space: nowrap;
    overflow: hidden;
  }

  .status span:first-child {
    padding-left: 0;
    border-left: 0;
  }
</style>
